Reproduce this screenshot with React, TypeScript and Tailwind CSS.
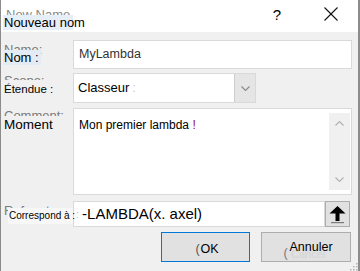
import React from 'react';

function Chevron({ up = false, color = '#8a8a8a' }: { up?: boolean; color?: string }) {
    return (
        <svg width="9" height="5" viewBox="0 0 9 5" fill="none">
            <polyline
                points={up ? '0.5,4.5 4.5,0.5 8.5,4.5' : '0.5,0.5 4.5,4.5 8.5,0.5'}
                stroke={color}
                strokeWidth="1.1"
            />
        </svg>
    );
}

export default function App() {
    return (
        <div className="w-[360px] h-[271px] overflow-hidden relative flex flex-col bg-[#f0f0f0] border-l border-r-2 border-[#8c8c8c] text-black font-['Liberation_Sans',Arial,sans-serif]">
            {/* Title bar */}
            <div className="h-[32px] shrink-0 bg-white relative flex items-center justify-end gap-[41px] pr-[20px]">
                <span className="absolute left-[5px] top-[5px] text-[13px] text-[#8a8a8a]">New Name</span>
                <span className="absolute left-[2px] top-[15px] h-[15px] w-[70px] bg-[#e6eef7] text-[13px] leading-[15px] pl-[1px] whitespace-nowrap">
                    Nouveau nom
                </span>
                <span className="text-[15px] leading-none mt-[-4px] mr-[2px]">?</span>
                <svg width="14" height="14" viewBox="0 0 14 14" className="mt-[-4px]">
                    <line x1="0.5" y1="0.5" x2="13.5" y2="13.5" stroke="#111" strokeWidth="1.1" />
                    <line x1="13.5" y1="0.5" x2="0.5" y2="13.5" stroke="#111" strokeWidth="1.1" />
                </svg>
            </div>

            {/* Form */}
            <div className="flex flex-col pr-[6px]">
                {/* Name */}
                <div className="flex h-[29px] mt-[8px]">
                    <div className="w-[72px] shrink-0 relative">
                        <span className="absolute left-[3px] top-[0px] text-[13px] text-[#7a7a7a]">Name:</span>
                        <span className="absolute left-[2px] top-[10px] h-[15px] w-[38px] bg-[#e3ebf4] text-[13px] leading-[16px] pl-[1px]">Nom :</span>
                    </div>
                    <div className="flex-1 bg-white border border-[#d9d9d9] flex items-center pl-[5px] text-[12.5px] text-[#333]">
                        MyLambda
                    </div>
                </div>

                {/* Scope */}
                <div className="flex h-[30px] mt-[4px]">
                    <div className="w-[72px] shrink-0 relative">
                        <span className="absolute left-[3px] top-[-2px] text-[13px] text-[#7a7a7a]">Scope:</span>
                        <span className="absolute left-[2px] top-[7px] h-[16px] w-[50px] bg-[#f0f0f0] text-[11.5px] leading-[18px] pl-[1px] whitespace-nowrap">
                            Étendue :
                        </span>
                    </div>
                    <div className="w-[183px] flex border border-[#d9d9d9] bg-white">
                        <div className="flex-1 flex items-center pl-[4px] text-[13px]">
                            Classeur <span className="ml-[3px] text-[#c8c8c8]">:</span>
                        </div>
                        <div className="w-[21px] bg-[#e5e5e5] border-l border-[#cdcdcd] flex items-center justify-center">
                            <Chevron />
                        </div>
                    </div>
                </div>

                {/* Comment */}
                <div className="flex h-[87px] mt-[5px]">
                    <div className="w-[72px] shrink-0 relative">
                        <span className="absolute left-[3px] top-[-2px] text-[13px] text-[#7a7a7a]">Comment:</span>
                        <span className="absolute left-[2px] top-[8px] h-[18px] w-[60px] bg-[#f0f0f0] text-[13.5px] leading-[18px] pl-[1px]">Moment</span>
                    </div>
                    <div className="flex-1 flex bg-white border border-[#d9d9d9]">
                        <div className="flex-1 pl-[5px] pt-[7px] text-[12px]">
                            Mon premier lambda <span className="text-[#9c0a4e]">!</span>
                        </div>
                        <div className="w-[21px] my-[4px] mr-[1px] bg-[#f0f0f0] flex flex-col items-center justify-between py-[8px]">
                            <Chevron up color="#b0b0b0" />
                            <Chevron color="#b0b0b0" />
                        </div>
                    </div>
                </div>

                {/* Refers to */}
                <div className="flex h-[26px] mt-[6px]">
                    <div className="w-[72px] shrink-0 relative">
                        <span className="absolute left-[3px] top-[0px] text-[13px] text-[#7a7a7a]">Refers to:</span>
                        <span className="absolute left-[7px] top-[7px] h-[16px] w-[65px] bg-[#f7f7f7] text-[10px] leading-[16px] pl-[1px] whitespace-nowrap">
                            Correspond à :
                        </span>
                    </div>
                    <div className="flex-1 flex items-center bg-white border border-[#d9d9d9] pl-[2px] text-[15px] whitespace-nowrap overflow-hidden">
                        <span className="text-[11px] text-[#bbbbbb] mr-[3px]">:</span>
                        -LAMBDA(x. axel)
                    </div>
                    <div className="w-[25px] mr-[2px] bg-[#e1e1e1] border border-[#adadad]">
                        <svg width="23" height="24" viewBox="0 0 23 24">
                            <polygon points="11.5,4 3.5,11.5 19.5,11.5" fill="#000" />
                            <rect x="9.5" y="11" width="4" height="8" fill="#000" />
                            <rect x="5" y="20" width="13" height="1.2" fill="#7a7a7a" />
                        </svg>
                    </div>
                </div>

                {/* Buttons */}
                <div className="flex justify-end gap-[11px] h-[30px] mt-[5px] pr-[1px]">
                    <button className="w-[89px] bg-[#e1e1e1] border border-[#0078d7] flex items-center justify-center pt-[5px] pl-[3px] text-[12.5px]">
                        <span className="text-[#555] mr-[1px]">(</span>OK
                    </button>
                    <button className="w-[90px] bg-[#e1e1e1] border border-[#adadad] relative flex items-start justify-center pt-[5px] pl-[10px] text-[12.5px]">
                        <span className="absolute left-[29px] top-[13px] text-[11px] text-[#d4d4d4]">Cancel</span>
                        <span className="relative">
                            <span className="absolute left-[-6px] top-[6px] text-[#777]">(</span>
                            Annuler
                        </span>
                    </button>
                </div>
            </div>

            {/* Resize grip */}
            <svg width="9" height="9" viewBox="0 0 9 9" className="absolute right-0 bottom-0">
                <rect x="7" y="1" width="1.5" height="1.5" fill="#b5b5b5" />
                <rect x="4" y="4" width="1.5" height="1.5" fill="#b5b5b5" />
                <rect x="7" y="4" width="1.5" height="1.5" fill="#b5b5b5" />
                <rect x="1" y="7" width="1.5" height="1.5" fill="#b5b5b5" />
                <rect x="4" y="7" width="1.5" height="1.5" fill="#b5b5b5" />
                <rect x="7" y="7" width="1.5" height="1.5" fill="#b5b5b5" />
            </svg>
        </div>
    );
}
